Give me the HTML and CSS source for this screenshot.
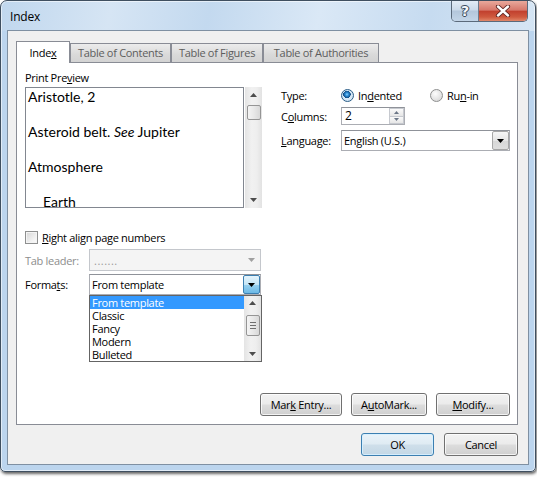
FILE: index.html
```html
<!DOCTYPE html>
<html>
<head>
<meta charset="utf-8">
<title>Index</title>
<link rel="stylesheet" href="styles.css">
</head>
<body>
<div class="window">
  <div class="titlebar">
    <span class="title">Index</span>
    <div class="caption-btns">
      <div class="cbtn help">?</div>
      <div class="cbtn close">
        <svg width="16" height="12" viewBox="0 0 16 12">
          <path d="M3 1.5 L13 10.5 M13 1.5 L3 10.5" stroke="#5a2320" stroke-width="4.2" stroke-linecap="round"/>
          <path d="M3 1.5 L13 10.5 M13 1.5 L3 10.5" stroke="#ffffff" stroke-width="2.4" stroke-linecap="round"/>
        </svg>
      </div>
    </div>
  </div>
  <div class="client">
    <div class="tabs">
      <div class="tab active"><span>Inde<u>x</u></span></div>
      <div class="tab t-contents"><span>Table of Contents</span></div>
      <div class="tab t-figures"><span>Table of Figures</span></div>
      <div class="tab t-auth"><span>Table of Authorities</span></div>
    </div>
    <div class="panel">
      <div class="top">
        <div class="preview-col">
          <div class="label">Print Pre<u>v</u>iew</div>
          <div class="preview-row">
            <div class="preview">
              <p>Aristotle, 2</p>
              <p>Asteroid belt. <i>See</i> Jupiter</p>
              <p>Atmosphere</p>
              <p class="sub">Earth</p>
            </div>
            <div class="vscroll">
              <svg class="arr" width="7" height="4" viewBox="0 0 7 4"><polygon points="0,4 7,4 3.5,0" fill="#4d4d4d"/></svg>
              <div class="thumb thumb-preview"></div>
              <div class="spacer"></div>
              <svg class="arr" width="7" height="4" viewBox="0 0 7 4"><polygon points="0,0 7,0 3.5,4" fill="#4d4d4d"/></svg>
            </div>
          </div>
        </div>
        <div class="options">
          <div class="orow r-type">
            <span class="olabel">Type:</span>
            <span class="radio-item first"><span class="radio checked"></span><span>In<u>d</u>ented</span></span>
            <span class="radio-item"><span class="radio"></span><span>Ru<u>n</u>-in</span></span>
          </div>
          <div class="orow r-cols">
            <span class="olabel">C<u>o</u>lumns:</span>
            <div class="spin">
              <span class="spin-val">2</span>
              <div class="spin-btns">
                <div class="sb"><svg width="5" height="3" viewBox="0 0 5 3"><polygon points="0,3 5,3 2.5,0" fill="#6b7686"/></svg></div>
                <div class="sb"><svg width="5" height="3" viewBox="0 0 5 3"><polygon points="0,0 5,0 2.5,3" fill="#6b7686"/></svg></div>
              </div>
            </div>
          </div>
          <div class="orow r-lang">
            <span class="olabel"><u>L</u>anguage:</span>
            <div class="combo lang">
              <span class="combo-val">English (U.S.)</span>
              <div class="drop-btn boxed"><svg width="7" height="4" viewBox="0 0 7 4"><polygon points="0,0 7,0 3.5,4" fill="#000"/></svg></div>
            </div>
          </div>
        </div>
      </div>
      <div class="check-row">
        <span class="checkbox"></span><span><u>R</u>ight align page numbers</span>
      </div>
      <div class="frow r-leader">
        <span class="flabel disabled-text">Tab leader:</span>
        <div class="combo disabled">
          <span class="combo-val dots">.......</span>
          <div class="drop-btn"><svg width="7" height="4" viewBox="0 0 7 4"><polygon points="0,0 7,0 3.5,4" fill="#a0a0a0"/></svg></div>
        </div>
      </div>
      <div class="frow r-formats">
        <span class="flabel">Forma<u>t</u>s:</span>
        <div class="combo formats">
          <span class="combo-val">From template</span>
          <div class="drop-btn hot"><svg width="7" height="4" viewBox="0 0 7 4"><polygon points="0,0 7,0 3.5,4" fill="#000"/></svg></div>
          <div class="droplist">
            <div class="items">
              <div class="item sel">From template</div>
              <div class="item">Classic</div>
              <div class="item">Fancy</div>
              <div class="item">Modern</div>
              <div class="item">Bulleted</div>
            </div>
            <div class="vscroll list-scroll">
              <svg class="arr" width="7" height="4" viewBox="0 0 7 4"><polygon points="0,4 7,4 3.5,0" fill="#4d4d4d"/></svg>
              <div class="thumb thumb-list"><span></span><span></span><span></span></div>
              <div class="spacer"></div>
              <svg class="arr" width="7" height="4" viewBox="0 0 7 4"><polygon points="0,0 7,0 3.5,4" fill="#4d4d4d"/></svg>
            </div>
          </div>
        </div>
      </div>
      <div class="btn-row">
        <div class="btn b-mark"><span>Mar<u>k</u> Entry...</span></div>
        <div class="btn b-auto"><span>A<u>u</u>toMark...</span></div>
        <div class="btn b-modify"><span><u>M</u>odify...</span></div>
      </div>
    </div>
    <div class="dlg-btns">
      <div class="btn b-ok default"><span>OK</span></div>
      <div class="btn b-cancel"><span>Cancel</span></div>
    </div>
  </div>
</div>
</body>
</html>
```

FILE: styles.css
```css
* { box-sizing: border-box; }
html, body { margin: 0; padding: 0; }
body {
  background: #ffffff;
  font-family: "Open Sans", "Noto Sans", "DejaVu Sans", sans-serif;
  font-size: 11px;
  letter-spacing: -0.3px;
  color: #000;
  width: 537px;
  height: 477px;
  overflow: hidden;
}
u { text-decoration: underline; text-underline-offset: 1px; }

.window {
  width: 536px;
  height: 472px;
  border: 1px solid #3f4f60;
  border-radius: 7px 7px 5px 5px;
  background:
    linear-gradient(to bottom, rgba(255,255,255,0) 0px, rgba(255,255,255,0) 30px, #bcd5ee 30px),
    linear-gradient(100deg, #c0d7ee 0%, #d6e5f4 18%, #c3d9ef 34%, #dae8f6 52%, #c6dbf0 70%, #d5e5f4 86%, #bed5ec 100%);
  box-shadow: 1px 2px 3px rgba(0,0,0,0.6), inset 0 0 0 1px rgba(255,255,255,0.55);
  padding: 0 6px 6px 6px;
  display: flex;
  flex-direction: column;
}

.titlebar {
  height: 29px;
  display: flex;
  justify-content: space-between;
  align-items: flex-start;
}
.title {
  padding-left: 3px;
  line-height: 31px;
  font-size: 12px;
  letter-spacing: -0.2px;
  color: #000;
}
.caption-btns {
  display: flex;
  margin-right: 1px;
  border: 1px solid #5b6a7b;
  border-top: none;
  border-radius: 0 0 5px 5px;
  overflow: hidden;
  height: 21px;
}
.cbtn {
  height: 20px;
  display: flex;
  align-items: center;
  justify-content: center;
}
.help {
  width: 27px;
  border-right: 1px solid #6d7b8c;
  background: linear-gradient(to bottom, #e3ecf6 0%, #cbdaea 45%, #b3c6db 50%, #c3d5e8 100%);
  color: #f4f7fb;
  font-family: "DejaVu Sans", sans-serif;
  font-weight: bold;
  font-size: 14px;
  letter-spacing: 0;
  text-shadow: 0 0 1px #3d4d60, 0 0 1px #3d4d60, 1px 0 0 #3d4d60, -1px 0 0 #3d4d60, 0 1px 0 #3d4d60, 0 -1px 0 #3d4d60;
}
.close {
  width: 48px;
  background: linear-gradient(to bottom, #e9a99c 0%, #d7786b 45%, #c2412f 52%, #cf5a3f 80%, #e0876a 100%);
}

.client {
  flex: 1;
  border: 1px solid #7f90a2;
  background: #f0f0f0;
  padding: 10px 10px 0 8px;
  display: flex;
  flex-direction: column;
}

.tabs {
  display: flex;
  align-items: flex-end;
  height: 21px;
}
.tab {
  height: 19px;
  border: 1px solid #898c95;
  border-bottom: none;
  background: linear-gradient(to bottom, #ececec, #d9d9d9 60%, #d3d3d3);
  color: #5d5d5d;
  text-align: center;
  line-height: 17px;
  white-space: nowrap;
}
.tab.active {
  width: 54px;
  height: 22px;
  margin-bottom: -1px;
  background: #fff;
  color: #000;
  line-height: 22px;
  position: relative;
  z-index: 1;
}
.t-contents { width: 101px; }
.t-figures { width: 92px; }
.t-auth { width: 116px; }

.panel {
  flex: 1;
  background: #fff;
  border: 1px solid #898c95;
  padding: 7px 7px 8px 8px;
  display: flex;
  flex-direction: column;
}

.top { display: flex; }
.preview-col { width: 237px; }
.label { height: 15px; line-height: 15px; margin-bottom: 2px; }
.preview-row { display: flex; height: 121px; }
.preview {
  width: 219px;
  height: 121px;
  border: 1px solid #828790;
  overflow: hidden;
  padding: 0 0 0 2px;
  font-family: "Lato", "Open Sans", sans-serif;
  font-size: 14px;
  letter-spacing: 0;
}
.preview p {
  margin: 0 0 17px 0;
  height: 18px;
  line-height: 18px;
  white-space: nowrap;
}
.preview p.sub { padding-left: 15px; }

.vscroll {
  width: 17px;
  margin-left: 1px;
  background: linear-gradient(to right, #e4e4e4, #f1f1f1 40%, #eeeeee 70%, #e2e2e2);
  display: flex;
  flex-direction: column;
  align-items: center;
}
.vscroll .arr { margin-top: 6px; margin-bottom: 6px; flex: none; }
.vscroll .spacer { flex: 1; }
.thumb {
  width: 14px;
  border: 1px solid #959595;
  border-radius: 2px;
  background: linear-gradient(to right, #f4f4f4, #e8e8e8 50%, #d8d8d8);
  flex: none;
}
.thumb-preview { height: 15px; margin-top: 2px; }

.options { margin-left: 19px; margin-top: 16px; flex: 1; }
.orow { display: flex; align-items: center; }
.r-type { height: 18px; }
.r-cols { height: 18px; margin-top: 3px; }
.r-lang { height: 21px; margin-top: 5px; }
.olabel { width: 60px; flex: none; }
.radio-item { display: flex; align-items: center; }
.radio-item.first { width: 89px; }
.radio {
  width: 13px;
  height: 13px;
  border-radius: 50%;
  border: 1px solid #8e8f8f;
  background: radial-gradient(circle at 40% 35%, #fdfdfd, #e2e2e2 60%, #cfcfcf);
  margin-right: 4px;
  flex: none;
}
.radio.checked {
  border-color: #2b5e88;
  background:
    radial-gradient(circle at 45% 40%, #8fd2ff 0, #2c8fd8 1.6px, #114a82 3.6px, rgba(17,74,130,0) 3.8px),
    radial-gradient(circle, #e8f2fb, #c5ddf0);
}

.spin {
  width: 64px;
  height: 18px;
  border: 1px solid #abadb3;
  border-top-color: #8f9299;
  display: flex;
  background: #fff;
}
.spin-val { flex: 1; padding-left: 3px; line-height: 16px; font-size: 12px; }
.spin-btns { width: 15px; display: flex; flex-direction: column; }
.sb {
  flex: 1;
  border: 1px solid #c6c9cf;
  background: linear-gradient(to bottom, #fafafa, #e6e6e6);
  display: flex;
  align-items: center;
  justify-content: center;
}
.sb + .sb { border-top: none; }

.combo {
  position: relative;
  display: flex;
  align-items: center;
  background: #fff;
  border: 1px solid #abadb3;
  border-top-color: #8f9299;
}
.combo.lang { width: 169px; height: 21px; }
.combo-val { flex: 1; padding-left: 2px; white-space: nowrap; }
.drop-btn {
  width: 17px;
  height: 100%;
  display: flex;
  align-items: center;
  justify-content: center;
  flex: none;
}
.drop-btn.boxed {
  border: 1px solid #a7a7a7;
  border-radius: 2px;
  background: linear-gradient(to bottom, #f6f6f6, #e6e6e6 50%, #d7d7d7 51%, #dedede);
}
.drop-btn.hot {
  border: 1px solid #3c7fb1;
  border-radius: 2px;
  background: linear-gradient(to bottom, #e5f4fc, #c4e5f6 50%, #98d1ef 51%, #6cb9e6);
}

.check-row {
  display: flex;
  align-items: center;
  height: 13px;
  margin-top: 23px;
}
.checkbox {
  width: 13px;
  height: 13px;
  border: 1px solid #8e8f8f;
  background: linear-gradient(135deg, #d5d5d5, #f3f3f3 70%, #fafafa);
  box-shadow: inset 0 0 0 1px #f4f4f4;
  margin-right: 4px;
  flex: none;
}

.frow { display: flex; align-items: center; }
.flabel { width: 64px; flex: none; }
.disabled-text { color: #8d8d8d; }
.r-leader { margin-top: 5px; height: 22px; }
.r-formats { margin-top: 3px; height: 21px; }
.combo.disabled {
  width: 172px;
  height: 22px;
  background: #f4f4f4;
  border-color: #c4c7cc;
}
.combo.disabled .dots { color: #9a9a9a; letter-spacing: 0.5px; padding-left: 4px; }
.combo.formats { width: 172px; height: 21px; }

.droplist {
  position: absolute;
  left: -1px;
  top: 20px;
  width: 173px;
  height: 67px;
  border: 1px solid #646464;
  background: #fff;
  display: flex;
  z-index: 5;
  overflow: hidden;
}
.items { flex: 1; }
.item {
  height: 13px;
  line-height: 13px;
  padding-left: 2px;
  white-space: nowrap;
}
.item.sel { background: #3399ff; color: #fff; }
.list-scroll { margin-left: 0; }
.list-scroll .arr { margin-top: 5px; margin-bottom: 5px; }
.thumb-list {
  height: 21px;
  margin-top: 5px;
  display: flex;
  flex-direction: column;
  align-items: center;
  justify-content: center;
  gap: 2px;
}
.thumb-list span {
  display: block;
  width: 6px;
  height: 1px;
  background: #6e6e6e;
}

.btn-row {
  margin-top: auto;
  display: flex;
  justify-content: flex-end;
  gap: 9px;
}
.btn {
  height: 23px;
  border: 1px solid #707070;
  border-radius: 3px;
  background: linear-gradient(to bottom, #f2f2f2 0%, #ebebeb 48%, #dddddd 52%, #cfcfcf 100%);
  box-shadow: inset 0 0 0 1px rgba(255,255,255,0.75);
  display: flex;
  align-items: center;
  justify-content: center;
  white-space: nowrap;
}
.b-mark { width: 82px; }
.b-auto { width: 76px; }
.b-modify { width: 74px; }

.dlg-btns {
  display: flex;
  justify-content: flex-end;
  gap: 10px;
  padding: 8px 0;
}
.b-ok { width: 73px; }
.b-cancel { width: 74px; }
.btn.default {
  border-color: #3c7fb1;
  background: linear-gradient(to bottom, #eaf3f9 0%, #dfebf3 48%, #cfdfea 52%, #c3d7e5 100%);
  box-shadow: inset 0 0 0 1px rgba(214,240,255,0.9);
}
```
